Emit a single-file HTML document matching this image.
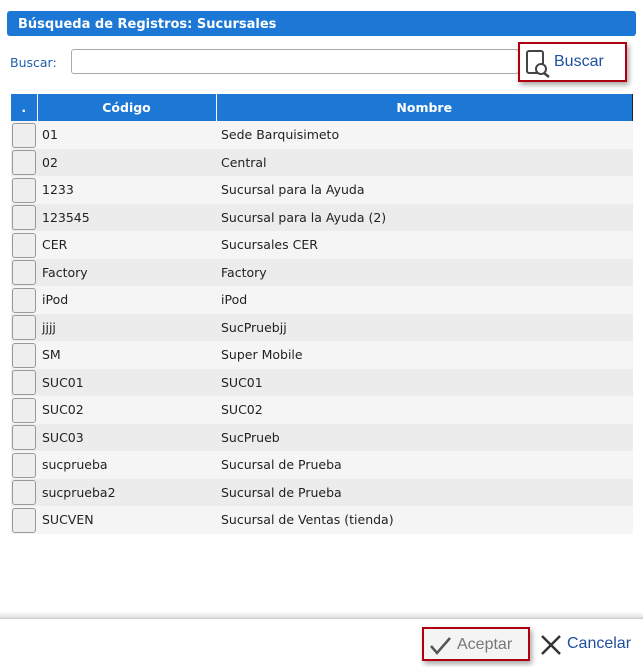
<!DOCTYPE html>
<html><head><meta charset="utf-8"><style>
*{margin:0;padding:0;box-sizing:border-box}
body{width:643px;height:667px;background:#fff;font-family:"DejaVu Sans","Liberation Sans",sans-serif;font-size:12.5px;color:#222;position:relative;overflow:hidden}
.title{position:absolute;left:7px;top:11px;width:629px;height:25px;background:#1c78d4;border-radius:3px;color:#fff;font-weight:bold;font-size:13px;line-height:27px;padding-left:11px}
.lbl{position:absolute;left:10px;top:55px;color:#1f5fb0;font-size:12.5px}
.inp{position:absolute;left:71px;top:49px;width:448px;height:25px;border:1px solid #aaa;border-radius:3px;background:#fff}
.bb{position:absolute;left:518px;top:42px;width:109px;height:40px;border:2px solid #b00010;box-shadow:2px 3px 5px rgba(0,0,0,.35);background:#fff}
.bb span{position:absolute;left:34px;top:9px;font-size:16px;color:#1f4fa0;font-family:"Liberation Sans",sans-serif}
table{position:absolute;left:11px;top:94px;width:622px;border-collapse:collapse}
th{background:#1c78d4;color:#fff;height:27px;font-size:12.5px;border-right:1px solid #fff}
th:last-child{border-right:1px solid #222}
td{height:27.5px;padding:0 0 0 5px;white-space:nowrap}
tr:nth-child(odd) td{background:#ececec}
tr:nth-child(even) td{background:#f5f5f5}
td.c{width:26px;padding:0 0 0 1px}
.cb{width:24px;height:25px;border:1px solid #999;border-radius:3px;background:#eee;margin-top:1px}
.foot{position:absolute;left:0;top:612px;width:643px;height:7px;background:linear-gradient(#fff,#ddd);border-bottom:1px solid #ccc}
.ab{position:absolute;left:422px;top:627px;width:108px;height:34px;border:2px solid #b00010;box-shadow:2px 3px 5px rgba(0,0,0,.35);background:#f4f4f4}
.ab span{position:absolute;left:33px;top:7px;font-size:16px;color:#777;font-family:"Liberation Sans",sans-serif}
.cc{position:absolute;left:567px;top:635px;font-size:16px;color:#1f4fa0;font-family:"Liberation Sans",sans-serif}
</style></head><body>
<div class="title">Búsqueda de Registros: Sucursales</div>
<div class="lbl">Buscar:</div>
<div class="inp"></div>
<div class="bb"><svg width="30" height="36" style="position:absolute;left:4px;top:2px"><rect x="3" y="5" width="16" height="22" rx="2" fill="none" stroke="#444" stroke-width="2"/><circle cx="17" cy="23" r="5" fill="#fff" stroke="#444" stroke-width="2"/><line x1="20" y1="27" x2="25" y2="31" stroke="#444" stroke-width="2.5"/></svg><span>Buscar</span></div>
<table>
<tr><th style="width:26px">.</th><th style="width:179px">Código</th><th>Nombre</th></tr>
<tr><td class="c"><div class="cb"></div></td><td>01</td><td>Sede Barquisimeto</td></tr>
<tr><td class="c"><div class="cb"></div></td><td>02</td><td>Central</td></tr>
<tr><td class="c"><div class="cb"></div></td><td>1233</td><td>Sucursal para la Ayuda</td></tr>
<tr><td class="c"><div class="cb"></div></td><td>123545</td><td>Sucursal para la Ayuda (2)</td></tr>
<tr><td class="c"><div class="cb"></div></td><td>CER</td><td>Sucursales CER</td></tr>
<tr><td class="c"><div class="cb"></div></td><td>Factory</td><td>Factory</td></tr>
<tr><td class="c"><div class="cb"></div></td><td>iPod</td><td>iPod</td></tr>
<tr><td class="c"><div class="cb"></div></td><td>jjjj</td><td>SucPruebjj</td></tr>
<tr><td class="c"><div class="cb"></div></td><td>SM</td><td>Super Mobile</td></tr>
<tr><td class="c"><div class="cb"></div></td><td>SUC01</td><td>SUC01</td></tr>
<tr><td class="c"><div class="cb"></div></td><td>SUC02</td><td>SUC02</td></tr>
<tr><td class="c"><div class="cb"></div></td><td>SUC03</td><td>SucPrueb</td></tr>
<tr><td class="c"><div class="cb"></div></td><td>sucprueba</td><td>Sucursal de Prueba</td></tr>
<tr><td class="c"><div class="cb"></div></td><td>sucprueba2</td><td>Sucursal de Prueba</td></tr>
<tr><td class="c"><div class="cb"></div></td><td>SUCVEN</td><td>Sucursal de Ventas (tienda)</td></tr>
</table>
<div class="foot"></div>
<div class="ab"><svg width="24" height="24" style="position:absolute;left:5px;top:5px"><polyline points="2,12 8,19 21,4" fill="none" stroke="#555" stroke-width="2.5"/></svg><span>Aceptar</span></div>
<svg width="24" height="24" style="position:absolute;left:539px;top:633px"><line x1="3" y1="3" x2="21" y2="21" stroke="#333" stroke-width="2.5"/><line x1="21" y1="3" x2="3" y2="21" stroke="#333" stroke-width="2.5"/></svg>
<div class="cc">Cancelar</div>
</body></html>
